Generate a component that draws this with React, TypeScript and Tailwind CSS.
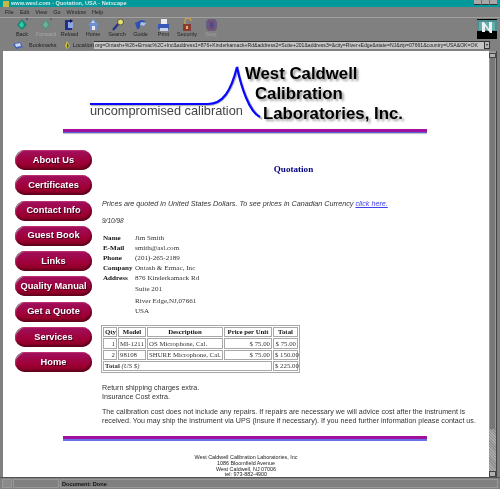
const serif = "font-['Liberation_Serif',serif]";

function Icon({ kind }: { kind: string }) {
  const c: Record<string, JSX.Element> = {
    back: <><path d="M6 1 L11 7 L6 12 L1 7 Z" fill="#0f8a6a" /><path d="M6 3 L8 7 L6 10 L3 7 Z" fill="#36c9b0" /><path d="M10 1h2" stroke="#1b2a8a" /></>,
    forward: <><path d="M6 1 L11 7 L6 12 L1 7 Z" fill="#5a8f80" /><path d="M6 3 L8 7 L6 10 L3 7 Z" fill="#70b0a0" /><path d="M10 1h2" stroke="#445" /></>,
    reload: <><path d="M2 2h7v10H2z" fill="#20308a" /><path d="M5 4h5v6H5z" fill="#8fa8e0" /><path d="M7 1l3 2-3 2z" fill="#101860" /></>,
    home: <><path d="M1 7 L6.5 1 L12 7 L10 7 L10 12 L3 12 L3 7 Z" fill="#6f90d0" /><path d="M5 8h3v4H5z" fill="#e8e8f0" /><path d="M6 2l2 3H4z" fill="#c8d4ef" /></>,
    search: <><path d="M2 12 L8 5" stroke="#20308a" strokeWidth="2" /><circle cx="9.5" cy="4" r="3" fill="#e8e070" stroke="#554" /></>,
    guide: <><path d="M1 5 L7 2 L12 3 L7 6 L5 11 L3 11 Z" fill="#2f50b0" /><path d="M7 4l5 1-2 3-4-1z" fill="#a8bfe8" /></>,
    print: <><path d="M4 1h6v6H4z" fill="#e8eaf4" /><path d="M1 6h11v5H1z" fill="#3858b8" /><path d="M3 10h8v3H3z" fill="#c8d0ea" /></>,
    security: <><path d="M2 6h8v7H2z" fill="#8a3a30" /><path d="M4 6V3a3 3 0 0 1 6 0" stroke="#c9a040" fill="none" strokeWidth="1.4" /><path d="M5 8h2v3H5z" fill="#d8b860" /></>,
    stop: <><path d="M3 1h7l2 3v6l-2 3H3l-2-3V4z" fill="#6a5a80" /><path d="M4 3h5v8H4z" fill="#7a4a6a" /><path d="M5 5h3v4H5z" fill="#4a4a90" /></>,
  };
  return <svg viewBox="0 0 13 13" className="w-[13px] h-[13px]">{c[kind]}</svg>;
}

const tools: [string, string, string][] = [
  ["back", "Back", "w-[24px]"],
  ["forward", "Forward", "w-[24px] text-[#a8a8a8]"],
  ["reload", "Reload", "w-[23px]"],
  ["home", "Home", "w-[24px]"],
  ["search", "Search", "w-[24px]"],
  ["guide", "Guide", "w-[23px]"],
  ["print", "Print", "w-[23px]"],
  ["security", "Security", "w-[24px]"],
  ["stop", "Stop", "w-[24px] text-[#a0a0a0]"],
];

const nav = ["About Us", "Certificates", "Contact Info", "Guest Book", "Links", "Quality Manual", "Get a Quote", "Services", "Home"];

function Logo() {
  return (
    <svg width="420" height="73" viewBox="0 0 420 73" className="block shrink-0">
      <path d="M88 49 H205 C220 49 228 36 235 14 C239 31 247 54 259 63" fill="none" stroke="#b8b8b8" strokeWidth="2.4" />
      <path d="M87 48 H205 C220 48 228 35 234 11 C238 30 246 56 257 61" fill="none" stroke="#0808ff" strokeWidth="2.2" />
      <g fontFamily="'Liberation Sans',sans-serif" fontWeight="700" fontSize="16.8" fill="#000" className="drop-shadow-[2px_2px_1px_#999]">
        <text x="242" y="23">West Caldwell</text>
        <text x="252" y="43">Calibration</text>
        <text x="260" y="63">Laboratories, Inc.</text>
      </g>
      <text x="87" y="59" fontFamily="'Liberation Sans',sans-serif" fontSize="12.8" fill="#444">uncompromised calibration</text>
    </svg>
  );
}

const cellCls = "border border-[#a8a8a8] px-[1px] h-[10.3px] leading-[8px] whitespace-nowrap";

export default function App() {
  return (
    <div className="w-[500px] h-[489px] bg-[#808080] flex flex-col overflow-hidden font-['Liberation_Sans',sans-serif] text-black blur-[0.4px]">
      {/* Title bar */}
      <div className="h-[7px] bg-[#009a9a] flex items-center justify-between pl-[3px] pr-[3px] shrink-0">
        <div className="flex items-center gap-[2px]">
          <div className="w-[6px] h-[6px] bg-[#c8b848]" />
          <span className="text-[5.6px] leading-[7px] text-[#d8e8e8] font-bold">www.wesl.com - Quotation, USA - Netscape</span>
        </div>
        <div className="flex gap-[1px] self-start">
          <div className="w-[7px] h-[5px] bg-[#a8a8a8] border-b border-[#333]" />
          <div className="w-[7px] h-[5px] bg-[#a8a8a8] border-b border-[#333]" />
          <div className="w-[7px] h-[5px] bg-[#a8a8a8] border-b border-[#333]" />
        </div>
      </div>
      {/* Menu */}
      <div className="h-[9px] flex items-center pl-[5px] gap-[6px] text-[5.5px] leading-[8px] text-[#222] shrink-0">
        <span>File</span><span>Edit</span><span>View</span><span>Go</span><span>Window</span><span>Help</span>
      </div>
      <div className="h-[1px] bg-[#a0a0a0] shrink-0 mt-[1px]" />
      {/* Toolbar */}
      <div className="h-[21px] flex items-start pl-[10px] shrink-0 justify-between pr-[3px]">
        <div className="flex">
          {tools.map(([k, l, w]) => (
            <div key={k} className={`${w} flex flex-col items-center text-[5.5px] leading-[7px] text-[#222]`}>
              <Icon kind={k} />
              <span>{l}</span>
            </div>
          ))}
        </div>
        <svg width="20" height="20" viewBox="0 0 20 20" className="mt-[1px]">
          <rect width="20" height="20" fill="#000" />
          <rect y="1" width="20" height="11" fill="#4a9090" />
          <path d="M2 3 L18 3 L18 11 L2 11Z" fill="#7fc8c8" opacity=".5" />
          <path d="M5 13V3h2l5 7V3h3v11h-2L8 7v6z" fill="#f0f0f0" />
        </svg>
      </div>
      {/* Location */}
      <div className="h-[11px] flex items-center pl-[12px] pr-[10px] text-[5.5px] leading-[8px] text-[#222] shrink-0">
        <svg width="12" height="8" viewBox="0 0 12 8" className="mr-[5px]">
          <path d="M1 3 L8 1 L11 6 L4 8Z" fill="#4060c0" /><path d="M3 3l5-1 1 3-5 1z" fill="#c8d8f0" />
        </svg>
        <span className="w-[30px]">Bookmarks</span>
        <svg width="7" height="8" viewBox="0 0 7 8" className="ml-[5px] mr-[1px]">
          <path d="M3 0 L6 5 L3 8 L1 5Z" fill="#d0c030" /><path d="M3 2l2 3-2 2z" fill="#2050a0" />
        </svg>
        <span className="w-[21px] ml-[1px]">Location:</span>
        <div className="flex-1 h-[8px] bg-[#c4c4c4] border-t border-[#333] overflow-hidden text-[5.1px] leading-[7px] whitespace-nowrap pl-[1px] min-w-0">
          org=Ontash+%26+Ermac%2C+Inc&amp;address1=876+Kinderkamack+Rd&amp;address2=Suite+201&amp;address3=&amp;city=River+Edge&amp;state=NJ&amp;zip=07661&amp;country=USA&amp;OK=OK
        </div>
        <div className="w-[6px] h-[8px] bg-[#b8b8b8] border border-[#333] flex items-center justify-center text-[4px] shrink-0">▾</div>
      </div>
      <div className="h-[1px] shrink-0" />
      {/* Content */}
      <div className="flex h-[426px] shrink-0 pl-[3px]">
        <main className="w-[486px] bg-white overflow-hidden flex flex-col pt-[5px]">
          <Logo />
          <div className="h-[4px] w-[364px] ml-[60px] bg-[#a0109a] border-b border-[#5a60e0] shadow-[0_1px_1px_#bbb] shrink-0" />
          <div className="flex">
            <nav className="w-[99px] pl-[12px] pt-[17px] flex flex-col gap-[5.3px] shrink-0">
              {nav.map((n) => (
                <div key={n} className="relative w-[77px] h-[20px] rounded-[10px] bg-[linear-gradient(#a0105f,#a00038_60%,#880020)] shadow-[inset_-1px_-2px_2px_#60001f,inset_1px_1px_1px_#c03070] overflow-hidden flex items-center justify-center text-white font-bold text-[9.3px] leading-[10px] whitespace-nowrap pb-[1px] [text-shadow:1px_1px_0_#400018]">
                  <span className="absolute left-0 top-0 w-0 h-0 border-t-[8px] border-r-[8px] border-t-[#909090] border-r-transparent" />
                  <span className="relative">{n}</span>
                </div>
              ))}
            </nav>
            <div className="flex-1 min-w-0 flex flex-col text-[#333]">
              <div className={`${serif} text-center font-bold text-[9.1px] leading-[10px] text-[#000080] mt-[30.5px] w-[383px]`}>Quotation</div>
              <p className="italic text-[7.2px] leading-[9px] mt-[25.5px] whitespace-nowrap">
                Prices are quoted in United States Dollars. To see prices in Canadian Currency <a className="underline text-[#4040f0]">click here.</a>
              </p>
              <p className="italic text-[6.5px] leading-[8px] mt-[8.5px]">9/10/98</p>
              <div className={`${serif} mt-[8px] ml-[1px] text-[7.1px] leading-[10.2px] grid grid-cols-[32px_1fr] whitespace-nowrap`}>
                <b className="text-[#111]">Name</b><span>Jim Smith</span>
                <b className="text-[#111]">E-Mail</b><span>smith@asl.com</span>
                <b className="text-[#111]">Phone</b><span>(201)-265-2189</span>
                <b className="text-[#111]">Company</b><span>Ontash &amp; Ermac, Inc</span>
                <b className="text-[#111]">Address</b><span>876 Kinderkamack Rd</span>
                <span /><span>Suite 201</span>
                <span className="mt-[2px]" /><span className="mt-[2px]">River Edge,NJ,07661</span>
                <span /><span>USA</span>
              </div>
              <table className={`${serif} mt-[9px] ml-[-1px] w-[198px] border border-[#a8a8a8] border-separate border-spacing-[1px] text-[6.8px] table-fixed`}>
                <colgroup>
                  <col className="w-[14px]" /><col className="w-[28px]" /><col className="w-[76px]" /><col className="w-[48px]" /><col className="w-[25px]" />
                </colgroup>
                <tbody>
                  <tr className="font-bold text-center text-[#111]">
                    <td className={cellCls}>Qty</td><td className={cellCls}>Model</td><td className={cellCls}>Description</td><td className={`${cellCls} px-0`}>Price per Unit</td><td className={cellCls}>Total</td>
                  </tr>
                  <tr>
                    <td className={`${cellCls} text-right`}>1</td><td className={cellCls}>MI-1211</td><td className={cellCls}>OS Microphone, Cal.</td><td className={`${cellCls} text-right`}>$ 75.00</td><td className={`${cellCls} text-right`}>$ 75.00</td>
                  </tr>
                  <tr>
                    <td className={`${cellCls} text-right`}>2</td><td className={cellCls}>98108</td><td className={cellCls}>SHURE Microphone, Cal.</td><td className={`${cellCls} text-right`}>$ 75.00</td><td className={`${cellCls} text-right`}>$ 150.00</td>
                  </tr>
                  <tr>
                    <td colSpan={4} className={cellCls}><b>Total</b> <i>(US $)</i></td><td className={`${cellCls} text-right`}>$ 225.00</td>
                  </tr>
                </tbody>
              </table>
              <p className="text-[7.15px] leading-[8.4px] mt-[11px] whitespace-nowrap">Return shipping charges extra.<br />Insurance Cost extra.</p>
              <p className="text-[7.15px] leading-[8.6px] mt-[7px] whitespace-nowrap">The calibration cost does not include any repairs. If repairs are necessary we will advice cost after the instrument is<br />received. You may ship the instrument via UPS (Insure if necessary). If you need further information please contact us.</p>
            </div>
          </div>
          <div className="h-[5px] w-[364px] ml-[60px] mt-[11px] bg-[#a0109a] border-b-2 border-[#6a70e8] shrink-0" />
          <div className="text-center text-[5.4px] leading-[5.6px] mt-[14px] w-[486px] text-[#222] shrink-0">
            West Caldwell Calibration Laboratories, Inc<br />1086 Bloomfield Avenue<br />West Caldwell, NJ 07006<br />tel: 973-882-4900
          </div>
        </main>
        <div className="w-[7px] flex flex-col bg-[#999] pt-[2px]">
          <div className="h-[5px] bg-[#b0b0b0] border border-[#444] shrink-0" />
          <div className="h-[371px] bg-[#777] border-x border-[#999] shrink-0" />
          <div className="flex-1 bg-[repeating-linear-gradient(45deg,#aaa_0_1px,#8c8c8c_1px_2px)]" />
          <div className="h-[6px] bg-[#b0b0b0] border border-[#444] shrink-0" />
        </div>
        <div className="w-[1px] bg-[#444] shrink-0" />
      </div>
      {/* Status */}
      <div className="flex-1 flex items-center gap-[1px] px-[2px] text-[5.6px] border-t border-[#555]">
        <div className="w-[10px] h-[9px] bg-[#8a8a8a] border border-[#999] shrink-0" />
        <div className="w-[46px] h-[9px] border border-[#999] shrink-0" />
        <div className="flex-1 h-[9px] border border-[#999] font-bold leading-[8px] pl-[1px] text-[#111]">Document: Done</div>
      </div>
    </div>
  );
}
